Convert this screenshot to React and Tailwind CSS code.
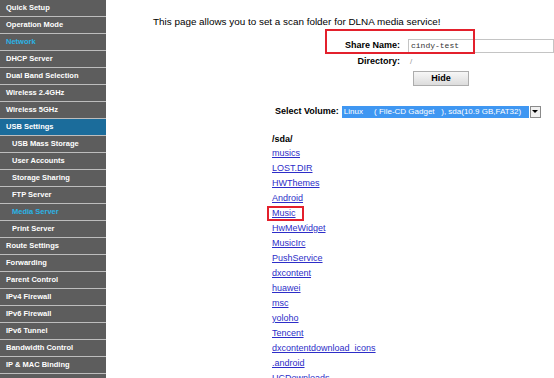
import React from 'react';

const menu = [
  { label: 'Quick Setup' },
  { label: 'Operation Mode' },
  { label: 'Network', accent: true },
  { label: 'DHCP Server' },
  { label: 'Dual Band Selection' },
  { label: 'Wireless 2.4GHz' },
  { label: 'Wireless 5GHz' },
  { label: 'USB Settings', active: true },
  { label: 'USB Mass Storage', sub: true },
  { label: 'User Accounts', sub: true },
  { label: 'Storage Sharing', sub: true },
  { label: 'FTP Server', sub: true },
  { label: 'Media Server', sub: true, accent: true },
  { label: 'Print Server', sub: true },
  { label: 'Route Settings' },
  { label: 'Forwarding' },
  { label: 'Parent Control' },
  { label: 'IPv4 Firewall' },
  { label: 'IPv6 Firewall' },
  { label: 'IPv6 Tunnel' },
  { label: 'Bandwidth Control' },
  { label: 'IP & MAC Binding' },
  { label: 'System Tools' },
];

const folders = [
  'musics',
  'LOST.DIR',
  'HWThemes',
  'Android',
  'Music',
  'HwMeWidget',
  'MusicIrc',
  'PushService',
  'dxcontent',
  'huawei',
  'msc',
  'yoloho',
  'Tencent',
  'dxcontentdownload_icons',
  '.android',
  'UCDownloads',
];

const MenuItem = ({ item }) => {
  const bg = item.active ? 'bg-[#1b6c9b]' : 'bg-[#5d5d5d]';
  const color = item.accent ? 'text-[#2ab3e6]' : 'text-white';
  return (
    <div className={`h-[17px] shrink-0 border-b border-[#bdbdbd] flex items-center ${bg} ${item.sub ? 'pl-[12px]' : 'pl-[6px]'}`}>
      <span className={`text-[7.5px] font-bold ${color}`}>{item.label}</span>
    </div>
  );
};

export default function App() {
  return (
    <div className="w-[554px] h-[378px] overflow-hidden bg-white flex font-['Liberation_Sans',Arial,sans-serif] text-black">
      <div className="w-[106px] shrink-0 flex flex-col">
        {menu.map((item) => (
          <MenuItem key={item.label} item={item} />
        ))}
      </div>

      <div className="flex-1 flex flex-col">
        <div className="mt-[6px] ml-[6px] h-[2px] bg-[#58ade0]" />

        <div className="mt-[10px] ml-[47px] h-[12px] leading-[12px] text-[9.9px]">
          This page allows you to set a scan folder for DLNA media service!
        </div>

        <div className="relative mt-[11px] flex items-center h-[14px]">
          <div className="w-[294px] text-right text-[9px] font-bold">Share Name:</div>
          <div className="ml-[8px] flex-1 h-[14px] border border-[#c4c4c4] flex items-center pl-[2px] font-['Liberation_Mono',monospace] text-[8px] text-[#333]">
            cindy-test
          </div>
          <div className="absolute left-[219px] top-[-10px] w-[150px] h-[25px] border-2 border-[#e3202c]" />
        </div>

        <div className="flex items-center h-[13px] mt-[2px]">
          <div className="w-[294px] text-right text-[9px] font-bold">Directory:</div>
          <div className="ml-[10px] text-[8px] text-[#999]">/</div>
        </div>

        <div className="mt-[3px] ml-[307px] w-[56px] h-[15px] border border-[#adadad] bg-gradient-to-b from-[#f7f7f7] to-[#dcdcdc] flex items-center justify-center text-[9px] font-bold">
          Hide
        </div>

        <div className="mt-[19px] ml-[169px] flex items-center h-[13px]">
          <span className="text-[9px] font-bold">Select Volume:</span>
          <div className="ml-[3px] w-[187px] h-[12px] bg-[#3f97f2] text-white text-[8px] leading-[12px] pl-[2px] whitespace-pre overflow-hidden">
            {'Linux     ( File-CD Gadget   ), sda(10.9 GB,FAT32)'}
          </div>
          <div className="ml-[1px] w-[11px] h-[12px] border border-[#8a8a8a] bg-[#f0f0f0] flex items-center justify-center">
            <div className="w-0 h-0 border-l-[3px] border-r-[3px] border-t-[3px] border-l-transparent border-r-transparent border-t-black" />
          </div>
        </div>

        <div className="mt-[15px] ml-[166px] h-[13px] leading-[13px] text-[9px] font-bold">/sda/</div>

        <div className="ml-[166px] flex flex-col">
          {folders.map((name) => (
            <div key={name} className="relative h-[15px] leading-[15px] text-[9px]">
              <a className="text-[#2d2dc8] underline">{name}</a>
              {name === 'Music' && (
                <div className="absolute left-[-5px] top-[0px] w-[37px] h-[15px] border-2 border-[#e3202c]" />
              )}
            </div>
          ))}
        </div>
      </div>
    </div>
  );
}
